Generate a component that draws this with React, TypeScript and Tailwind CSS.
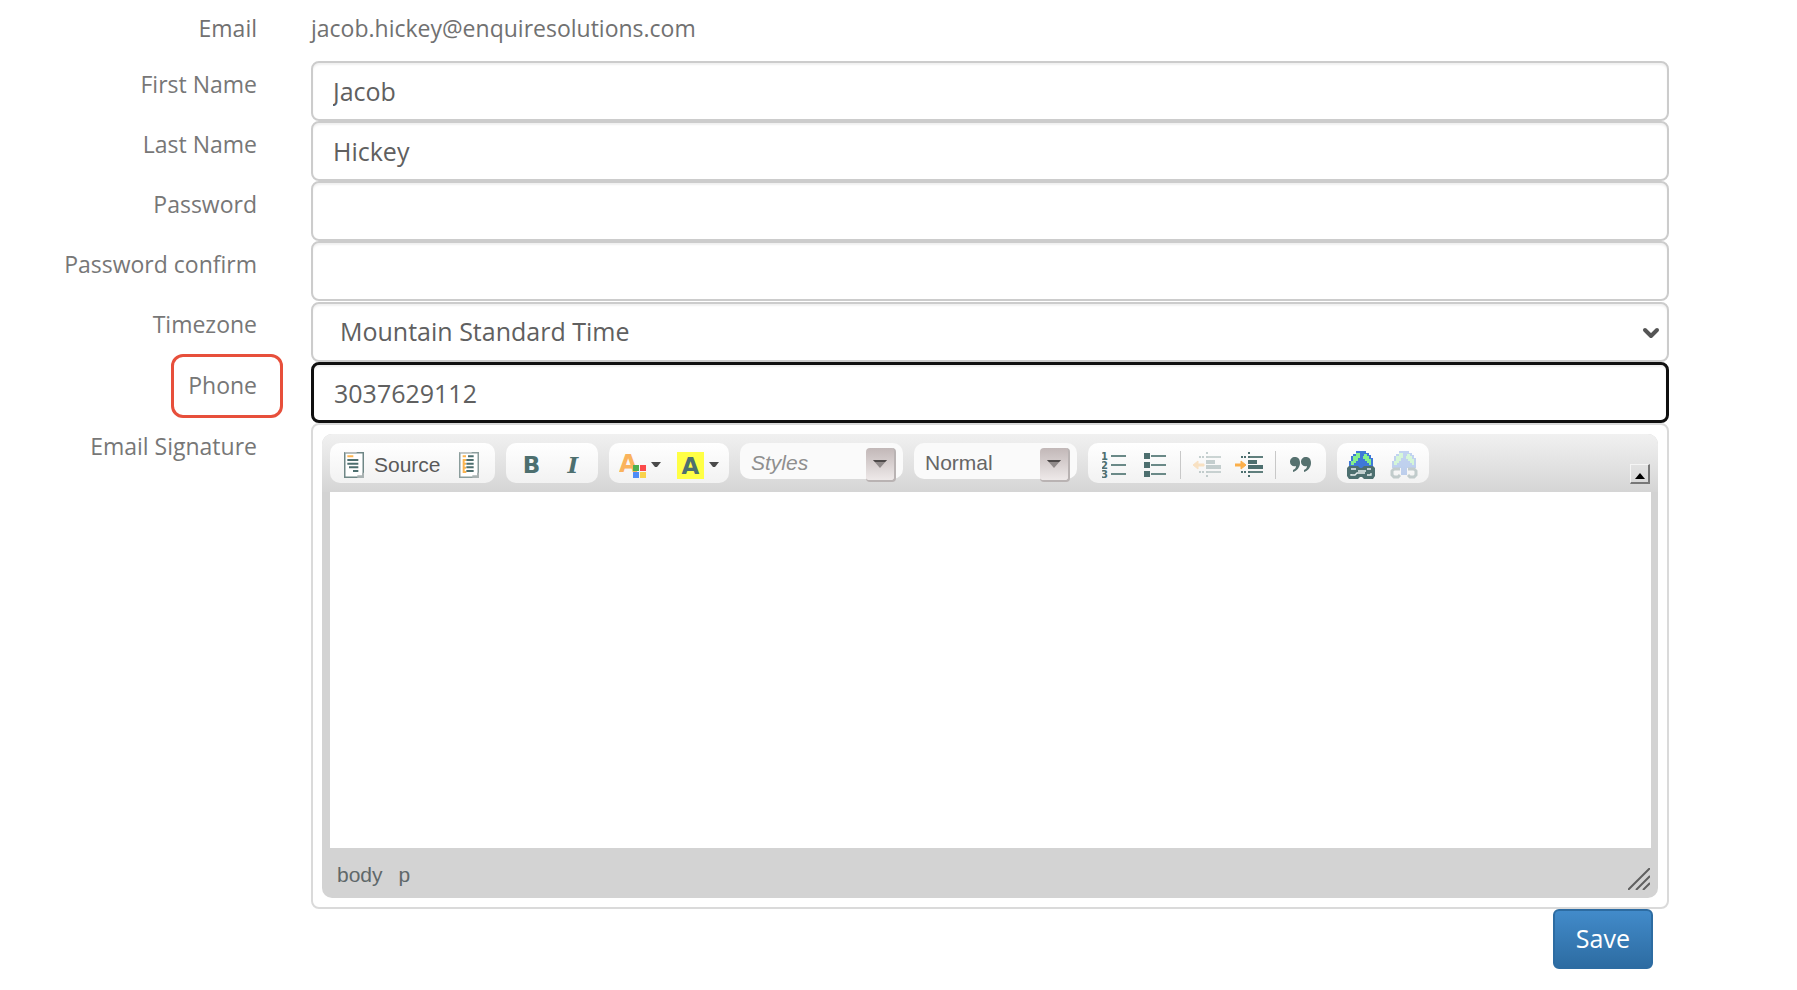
import React, { useState } from 'react';
import { ChevronDown } from 'lucide-react';

const LABEL = 'relative pt-[7px] text-right text-[23px] leading-8 text-[#777777]';
const FIELD =
  'block w-full rounded-lg bg-white px-5 text-[25px] text-[#606060] shadow-[inset_0_2px_2px_rgba(0,0,0,0.06)] outline-none';
const FIELD_IDLE = FIELD + ' h-[60px] border-2 border-[#cccccc]';
const FIELD_ACTIVE = FIELD + ' h-[61px] border-[3px] border-[#101010]';
const GROUP = 'flex h-10 items-center rounded-[10px] bg-linear-to-b from-white to-[#f2f2f2] pt-1';
const TEAL = '#4d6f6f';

interface RowProps {
  id: string;
  label: string;
  highlighted?: boolean;
  children: React.ReactNode;
}

function Row({ id, label, highlighted, children }: RowProps) {
  return (
    <div className="grid grid-cols-[257px_minmax(0,1fr)] gap-x-[54px]">
      <label htmlFor={id} className={LABEL}>
        {label}
        {highlighted && (
          <span className="pointer-events-none absolute -top-2 -right-[26px] h-16 w-28 rounded-xl border-[3px] border-[#e74f3b]" />
        )}
      </label>
      {children}
    </div>
  );
}

function SourceIcon() {
  return (
    <svg viewBox="0 0 60 78" className="h-[26px] w-5" fill="none">
      <path d="M2 2H58V76H2Z" fill="#fff" stroke="#6f8786" strokeWidth="5" />
      <path d="M2 2H38" stroke="#b8bcbc" strokeWidth="4" />
      <path d="M40 74H58V62" stroke="#a9b2b2" strokeWidth="8" />
      <path d="M10 13H28" stroke="#fbb450" strokeWidth="6" />
      <path d="M10 24H43M10 35H43M15 46H43M27 57H43" stroke={TEAL} strokeWidth="6" />
    </svg>
  );
}

function TemplateIcon() {
  return (
    <svg viewBox="0 0 60 78" className="h-[26px] w-5" fill="none">
      <path d="M2 2H58V76H2Z" fill="#fff" stroke="#8b9d9c" strokeWidth="5" />
      <path d="M2 2H38" stroke="#c3c6c6" strokeWidth="4" />
      <path d="M40 74H58V62" stroke="#a9b2b2" strokeWidth="8" />
      <path d="M11 13H21M22 24H14V60H22M14 35H21M14 47H21" stroke="#fbb450" strokeWidth="6" />
      <path d="M27 13H44M22 24H44M22 35H44M22 46H44M22 57H44" stroke={TEAL} strokeWidth="6" />
    </svg>
  );
}

function Caret() {
  return (
    <svg viewBox="0 0 10 6" className="h-[6px] w-[10px]">
      <path d="M0 0H10L6 5H4Z" fill="#4a4a4a" />
    </svg>
  );
}

function NumberedListIcon() {
  return (
    <svg viewBox="0 0 24 28" className="h-7 w-6">
      <g fill={TEAL} fontFamily="DejaVu Sans" fontWeight="bold" fontSize="10">
        <text x="-1" y="9">1</text>
        <text x="-1" y="18">2</text>
        <text x="-1" y="27">3</text>
      </g>
      <path d="M9 5H24M9 14H24M9 23H24" stroke="#6a8987" strokeWidth="2" />
    </svg>
  );
}

function BulletListIcon() {
  return (
    <svg viewBox="0 0 22 28" className="h-7 w-[22px]">
      <path d="M0 2H6V8H0ZM0 11H6V17H0ZM0 20H6V26H0Z" fill={TEAL} />
      <path d="M7 5H22M7 14H22M7 23H22" stroke="#6a8987" strokeWidth="2" />
    </svg>
  );
}

function IndentIcon({ outdent = false }: { outdent?: boolean }) {
  return (
    <svg viewBox="0 0 28 28" className={outdent ? 'h-7 w-7 opacity-30' : 'h-7 w-7'}>
      <path
        d={outdent ? 'M0 14L5 10V13H11V15H5V18Z' : 'M11 14L6 10V13H0V15H6V18Z'}
        fill="#fbaf4b"
        stroke="#fbaf4b"
      />
      <path d="M6 6H8M9 6H11M6 21H8M9 21H11M13 2H15M13 6H15M13 21H15M13 25H15" stroke={TEAL} strokeWidth="2" />
      <path d="M15 6H28M15 21H28" stroke="#607f7d" strokeWidth="2" />
      <path d="M13 11H22M13 16H28" stroke={TEAL} strokeWidth="4" />
    </svg>
  );
}

function QuoteIcon() {
  return (
    <svg viewBox="0 0 21 16" className="h-4 w-[21px]" fill="#56716f">
      <path d="M5 0C8 0 10 2 10 6C10 10 7 14 3 15V13C5 12 6 11 6 9C3 10 0 8 0 5C0 2 2 0 5 0Z" />
      <path d="M16 0C19 0 21 2 21 6C21 10 18 14 14 15V13C16 12 17 11 17 9C14 10 11 8 11 5C11 2 13 0 16 0Z" />
    </svg>
  );
}

function LinkIcon({ broken = false }: { broken?: boolean }) {
  return (
    <svg viewBox="0 0 28 28" className={broken ? 'h-7 w-7 opacity-30' : 'h-7 w-7'} fill="none">
      <path d="M9 0H19V2H22V4H24V7H26V17H2V10H4V5H6V3H9Z" fill="#3f78d8" />
      <path d="M9 2H13V7H11V10H9V12H7V14H4V10H6V5H9ZM17 3H20V5H22V8H24V14H22V12H20V10H18V8H16V5H17Z" fill="#84f08c" />
      {broken ? (
        <>
          <path d="M10 18H4L2 20V24L4 26H8L10 24M18 18H24L26 20V24L24 26H20L18 24" stroke={TEAL} strokeWidth="3" />
          <path d="M11 17H17V24H11Z" fill="#3f78d8" />
        </>
      ) : (
        <>
          <path d="M2 15H11L13 17H15L17 15H26L28 17V25L26 28H17L15 26H13L11 28H2L0 25V17Z" fill={TEAL} />
          <path d="M4 18H9M4 23V24H8L10 22H18M11 20H19M20 18H24M24 22V24H20" stroke="#e9efef" strokeWidth="1.3" />
        </>
      )}
    </svg>
  );
}

function ToolbarSelect({ label, italic = false }: { label: string; italic?: boolean }) {
  return (
    <div className="relative h-9 w-[163px]">
      <select
        aria-label={label}
        className={
          'h-9 w-full appearance-none rounded-[10px] bg-[#fafafa] pt-1 pl-[11px] text-[21px] leading-8 outline-none ' +
          (italic ? 'italic text-[#8f8f8f]' : 'text-[#666666]')
        }
      >
        <option>{label}</option>
      </select>
      <span className="pointer-events-none absolute top-[5px] right-[7px] flex h-[34px] w-[30px] items-center justify-center rounded border-r-2 border-b-2 border-[#b9b3b3] bg-linear-to-b from-[#c2b8b8] to-[#eee9e9]">
        <svg viewBox="0 0 14 8" className="h-2 w-[14px]">
          <path d="M0 0H14L7 8Z" fill="#8f8989" />
          <path d="M0 0H14L12 2H2Z" fill="#4d4949" />
        </svg>
      </span>
    </div>
  );
}

function Toolbar() {
  return (
    <div className="flex h-[58px] items-start bg-linear-to-b from-[#f1f1f1] to-[#d5d5d5] px-2 pt-[9px]">
      <div className="flex flex-1 items-start gap-[11px]">
        <div className={GROUP + ' w-[165px] pl-[14px]'}>
          <button type="button" className="flex items-center gap-[10px] text-[21px] leading-7 text-[#5a5a5a]">
            <SourceIcon />
            Source
          </button>
          <button type="button" aria-label="Templates" className="ml-[18px]">
            <TemplateIcon />
          </button>
        </div>
        <div className={GROUP + ' w-[92px] pl-4 text-[23px] font-bold text-[#4d6f6f]'}>
          <button type="button" className="w-[19px] font-['DejaVu_Sans'] leading-7">B</button>
          <button type="button" className="ml-6 w-4 font-['DejaVu_Serif'] leading-7 italic">I</button>
        </div>
        <div className={GROUP + ' w-[120px] pl-[10px]'}>
          <button type="button" aria-label="Text color" className="flex items-center gap-1">
            <svg viewBox="0 0 28 28" className="h-7 w-7">
              <text x="0" y="21" fill="#fab35c" fontFamily="DejaVu Sans" fontWeight="bold" fontSize="24">A</text>
              <path d="M14 14H20V20H14Z" fill="#4caf50" />
              <path d="M21 14H27V20H21Z" fill="#fb4b4b" />
              <path d="M14 21H20V27H14Z" fill="#4f8cf7" />
              <path d="M21 21H27V27H21Z" fill="#f9d24c" />
            </svg>
            <Caret />
          </button>
          <button type="button" aria-label="Background color" className="ml-4 flex items-center gap-[5px]">
            <span className="h-[27px] w-[27px] bg-[#ffff45] text-center font-['DejaVu_Sans'] text-[23px] leading-7 font-bold text-[#4d6f6f]">
              A
            </span>
            <Caret />
          </button>
        </div>
        <ToolbarSelect label="Styles" italic />
        <ToolbarSelect label="Normal" />
        <div className={GROUP + ' w-[238px] pl-[14px]'}>
          <button type="button" aria-label="Numbered list"><NumberedListIcon /></button>
          <button type="button" aria-label="Bulleted list" className="ml-[18px]"><BulletListIcon /></button>
          <span className="mr-3 ml-[14px] h-7 w-px bg-[#c8c8c8]" />
          <button type="button" aria-label="Decrease indent"><IndentIcon outdent /></button>
          <button type="button" aria-label="Increase indent" className="ml-[14px]"><IndentIcon /></button>
          <span className="mr-[14px] ml-3 h-7 w-px bg-[#c8c8c8]" />
          <button type="button" aria-label="Block quote"><QuoteIcon /></button>
        </div>
        <div className={GROUP + ' w-[92px] gap-[15px] pl-[10px]'}>
          <button type="button" aria-label="Link"><LinkIcon /></button>
          <button type="button" aria-label="Unlink"><LinkIcon broken /></button>
        </div>
      </div>
      <button
        type="button"
        aria-label="Collapse toolbar"
        className="mt-[21px] flex h-5 w-5 items-center justify-center border-t border-r-2 border-b-2 border-l border-t-[#f5f5f5] border-r-[#777777] border-b-[#777777] border-l-[#f5f5f5]"
      >
        <svg viewBox="0 0 10 6" className="mt-1 h-[6px] w-[10px]">
          <path d="M5 0L10 6H0Z" fill="#000" />
        </svg>
      </button>
    </div>
  );
}

export default function App() {
  const [profile, setProfile] = useState({
    firstName: 'Jacob',
    lastName: 'Hickey',
    password: '',
    passwordConfirm: '',
    phone: '3037629112',
    signature: '',
  });

  const update = (e: React.ChangeEvent<HTMLInputElement | HTMLTextAreaElement>) => {
    setProfile({ ...profile, [e.target.name]: e.target.value });
  };

  return (
    <form className="min-h-screen bg-white pr-32 font-['Open_Sans',sans-serif]" onSubmit={e => e.preventDefault()}>
      <div className="grid h-[61px] grid-cols-[257px_minmax(0,1fr)] gap-x-[54px] pt-3 text-[23px] leading-8 text-[#717171]">
        <span className="text-right">Email</span>
        <span>jacob.hickey@enquiresolutions.com</span>
      </div>
      <Row id="firstName" label="First Name">
        <input id="firstName" name="firstName" type="text" className={FIELD_IDLE} value={profile.firstName} onChange={update} />
      </Row>
      <Row id="lastName" label="Last Name">
        <input id="lastName" name="lastName" type="text" className={FIELD_IDLE} value={profile.lastName} onChange={update} />
      </Row>
      <Row id="password" label="Password">
        <input id="password" name="password" type="password" className={FIELD_IDLE} value={profile.password} onChange={update} />
      </Row>
      <Row id="passwordConfirm" label="Password confirm">
        <input id="passwordConfirm" name="passwordConfirm" type="password" className={FIELD_IDLE} value={profile.passwordConfirm} onChange={update} />
      </Row>
      <Row id="timezone" label="Timezone">
        <div className="relative pt-px">
          <select id="timezone" className={FIELD_IDLE + ' appearance-none pl-[27px]'}>
            <option>Mountain Standard Time</option>
          </select>
          <ChevronDown className="pointer-events-none absolute top-5 right-[6px] h-6 w-6 text-[#555555]" strokeWidth={4} />
        </div>
      </Row>
      <Row id="phone" label="Phone" highlighted>
        <input id="phone" name="phone" type="text" className={FIELD_ACTIVE} value={profile.phone} onChange={update} />
      </Row>
      <Row id="signature" label="Email Signature">
        <div>
          <div className="rounded-lg border-2 border-[#dadada] p-[9px] font-['Liberation_Sans',sans-serif]">
            <div className="overflow-hidden rounded-[10px] bg-[#d3d3d3]">
              <Toolbar />
              <div className="pr-[7px] pl-2">
                <textarea
                  id="signature"
                  name="signature"
                  className="block h-[356px] w-full resize-none bg-white p-4 text-[21px] outline-none"
                  value={profile.signature}
                  onChange={update}
                />
              </div>
              <div className="flex h-[50px] items-center justify-between px-2 pt-1 text-[21px] text-[#60686a]">
                <div className="flex gap-4 pl-[7px]">
                  <span>body</span>
                  <span>p</span>
                </div>
                <svg viewBox="0 0 22 22" className="mt-2 h-[22px] w-[22px]">
                  <path d="M0 22L22 0M8 22L22 8M15 22L22 15" stroke="#606060" strokeWidth="2" />
                </svg>
              </div>
            </div>
          </div>
          <div className="flex justify-end pr-4">
            <button
              type="submit"
              className="h-[60px] rounded-md border-2 border-[#2d6ca2] bg-linear-to-b from-[#428bca] to-[#2d6ca2] px-[21px] text-[25px] text-white"
            >
              Save
            </button>
          </div>
        </div>
      </Row>
    </form>
  );
}
